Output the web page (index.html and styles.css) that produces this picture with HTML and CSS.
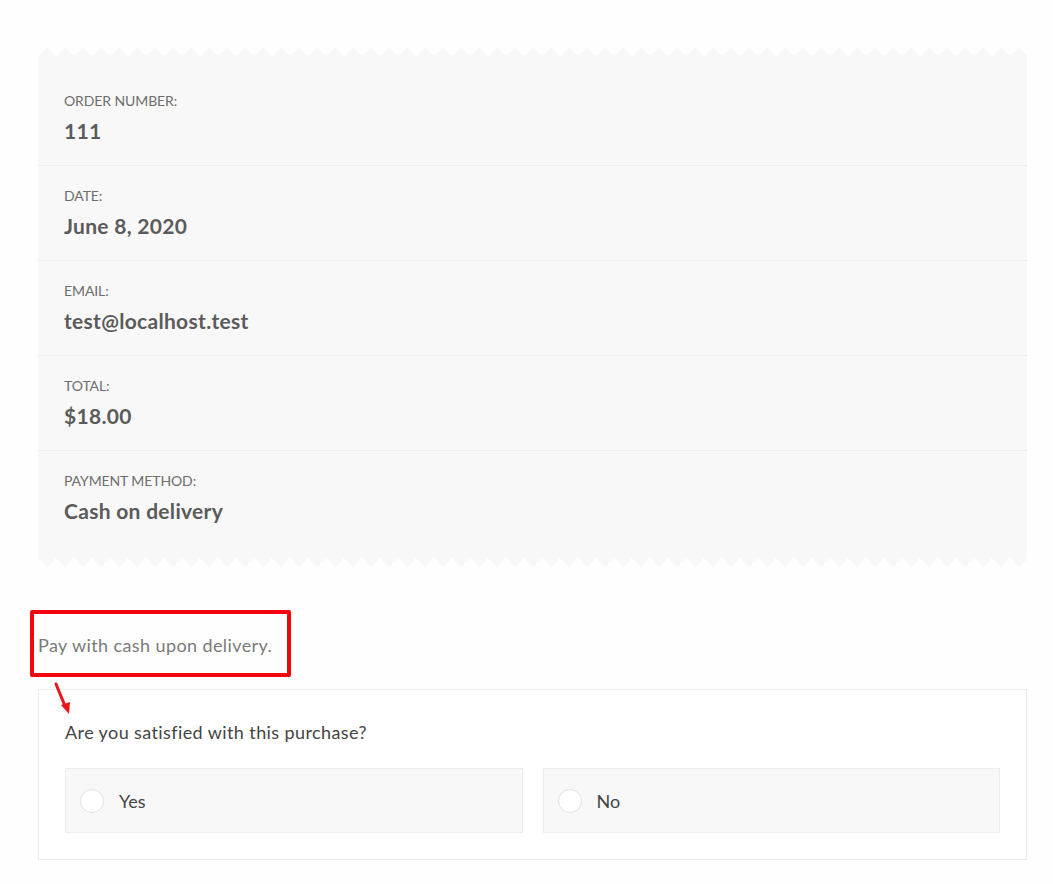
FILE: index.html
```html
<!DOCTYPE html>
<html lang="en">
<head>
    <meta charset="UTF-8">
    <meta name="viewport" content="width=device-width, initial-scale=1.0">
    <title>Order received</title>
    <link rel="stylesheet" href="styles.css">
</head>
<body>
    <div class="page">
        <ul class="order-overview">
            <li>
                <span class="label">Order number:</span>
                <strong>111</strong>
            </li>
            <li>
                <span class="label">Date:</span>
                <strong>June 8, 2020</strong>
            </li>
            <li>
                <span class="label">Email:</span>
                <strong>test@localhost.test</strong>
            </li>
            <li>
                <span class="label">Total:</span>
                <strong>$18.00</strong>
            </li>
            <li>
                <span class="label">Payment method:</span>
                <strong>Cash on delivery</strong>
            </li>
        </ul>

        <div class="note">
            <p>Pay with cash upon delivery.</p>
            <div class="highlight"></div>
            <svg class="arrow" width="24" height="40" viewBox="0 0 24 40">
                <line x1="3" y1="2" x2="12" y2="24" stroke="#e8161b" stroke-width="3" stroke-linecap="round"/>
                <polygon points="8,23 17,20 16,32" fill="#e8161b"/>
            </svg>
        </div>

        <div class="survey">
            <div class="question">Are you satisfied with this purchase?</div>
            <div class="options">
                <label class="option"><span class="radio"></span>Yes</label>
                <label class="option"><span class="radio"></span>No</label>
            </div>
        </div>
    </div>
</body>
</html>
```

FILE: styles.css
```css
* {
    margin: 0;
    padding: 0;
    box-sizing: border-box;
}

body {
    background: #fefefe;
    font-family: Lato, "Open Sans", sans-serif;
    color: #555;
}

.page {
    padding: 56px 26px 40px 38px;
}

/* receipt with zigzag edges */
.order-overview {
    list-style: none;
    background: #f8f8f8;
    padding: 15px 0 13px;
    position: relative;
}

.order-overview::before,
.order-overview::after {
    content: "";
    position: absolute;
    left: 0;
    right: 0;
    height: 9px;
}

.order-overview::before {
    top: -9px;
    background: conic-gradient(from 135deg at 50% 0, #f8f8f8 90deg, transparent 0) 0 0 / 18px 9px repeat-x;
}

.order-overview::after {
    bottom: -9px;
    background: conic-gradient(from -45deg at 50% 100%, #f8f8f8 90deg, transparent 0) 0 0 / 18px 9px repeat-x;
}

.order-overview li {
    padding: 20px 26px;
    border-bottom: 1px dotted #e4e4e4;
    display: flex;
    flex-direction: column;
}

.order-overview li:last-child {
    border-bottom: none;
}

.label {
    text-transform: uppercase;
    font-size: 14px;
    line-height: 20px;
    color: #6d6d6d;
    letter-spacing: -0.1px;
}

.order-overview strong {
    font-size: 21px;
    line-height: 28px;
    margin-top: 6px;
    color: #5b5b5b;
    font-weight: 700;
    letter-spacing: 0.3px;
}

.note {
    position: relative;
    margin-top: 74px;
}

.note p {
    font-size: 18px;
    line-height: 26px;
    color: #7a7a7a;
    letter-spacing: 0.4px;
}

.highlight {
    position: absolute;
    left: -8px;
    top: -22px;
    width: 261px;
    height: 67px;
    border: 4px solid #f2050d;
    border-radius: 2px;
}

.arrow {
    position: absolute;
    left: 15px;
    top: 50px;
}

.survey {
    margin-top: 31px;
    border: 1px solid #ededed;
    background: #fff;
    padding: 29px 26px 26px;
}

.question {
    font-size: 18px;
    line-height: 26px;
    color: #444;
    margin-bottom: 23px;
    letter-spacing: 0.4px;
}

.options {
    display: grid;
    grid-template-columns: 1fr 1fr;
    gap: 20px;
}

.option {
    display: flex;
    align-items: center;
    gap: 15px;
    height: 65px;
    padding-left: 14px;
    background: #f8f8f8;
    border: 1px solid #ececec;
    font-size: 18px;
    color: #444;
}

.radio {
    width: 24px;
    height: 24px;
    border-radius: 50%;
    background: #fff;
    border: 1px solid #e2e2e2;
}
```
